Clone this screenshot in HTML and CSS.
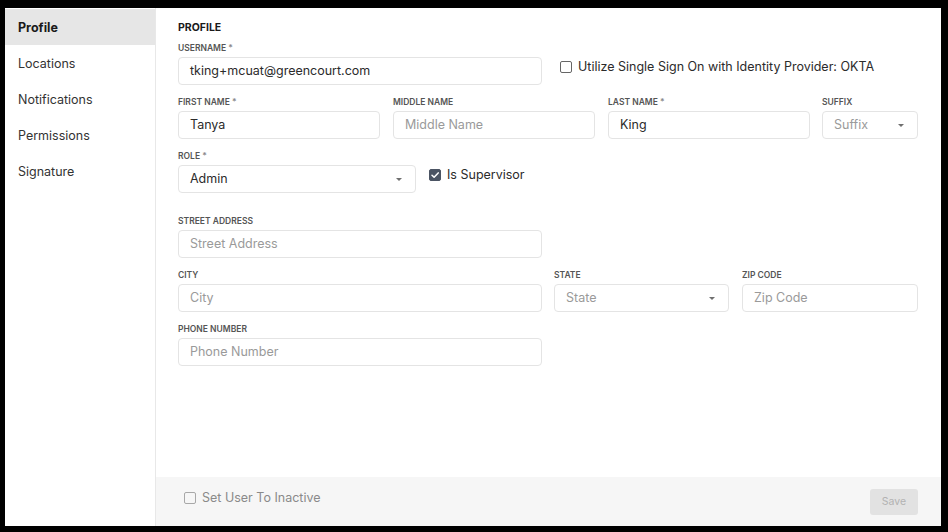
FILE: index.html
```html
<!DOCTYPE html>
<html>
<head>
<meta charset="utf-8">
<link rel="stylesheet" href="styles.css">
</head>
<body>
<div class="app">
  <nav class="sidebar">
    <div class="nav-item active">Profile</div>
    <div class="nav-item">Locations</div>
    <div class="nav-item">Notifications</div>
    <div class="nav-item">Permissions</div>
    <div class="nav-item">Signature</div>
  </nav>
  <main class="main">
    <div class="content">
      <h1 class="heading">PROFILE</h1>

      <div class="row">
        <div class="field w-wide">
          <label class="label">USERNAME <span class="req">*</span></label>
          <div class="input">tking+mcuat@greencourt.com</div>
        </div>
        <div class="check-group sso">
          <span class="checkbox"></span>
          <span class="check-label">Utilize Single Sign On with Identity Provider: OKTA</span>
        </div>
      </div>

      <div class="row">
        <div class="field w-name">
          <label class="label">FIRST NAME <span class="req">*</span></label>
          <div class="input">Tanya</div>
        </div>
        <div class="field w-name">
          <label class="label">MIDDLE NAME</label>
          <div class="input placeholder">Middle Name</div>
        </div>
        <div class="field w-name">
          <label class="label">LAST NAME <span class="req">*</span></label>
          <div class="input">King</div>
        </div>
        <div class="field w-suffix">
          <label class="label">SUFFIX</label>
          <div class="input select placeholder">Suffix<span class="caret"></span></div>
        </div>
      </div>

      <div class="row">
        <div class="field w-role">
          <label class="label">ROLE <span class="req">*</span></label>
          <div class="input select">Admin<span class="caret"></span></div>
        </div>
        <div class="check-group">
          <span class="checkbox checked">
            <svg viewBox="0 0 12 12" width="12" height="12"><path d="M3 6.2 L5.1 8.3 L9.2 3.9" fill="none" stroke="#fff" stroke-width="1.5" stroke-linecap="round" stroke-linejoin="round"/></svg>
          </span>
          <span class="check-label">Is Supervisor</span>
        </div>
      </div>

      <div class="row section-gap">
        <div class="field w-wide">
          <label class="label">STREET ADDRESS</label>
          <div class="input placeholder">Street Address</div>
        </div>
      </div>

      <div class="row">
        <div class="field w-wide">
          <label class="label">CITY</label>
          <div class="input placeholder">City</div>
        </div>
        <div class="field w-state">
          <label class="label">STATE</label>
          <div class="input select placeholder">State<span class="caret"></span></div>
        </div>
        <div class="field w-zip">
          <label class="label">ZIP CODE</label>
          <div class="input placeholder">Zip Code</div>
        </div>
      </div>

      <div class="row">
        <div class="field w-wide">
          <label class="label">PHONE NUMBER</label>
          <div class="input placeholder">Phone Number</div>
        </div>
      </div>
    </div>

    <footer class="footer">
      <div class="check-group inactive">
        <span class="checkbox light"></span>
        <span class="check-label">Set User To Inactive</span>
      </div>
      <button class="save">Save</button>
    </footer>
  </main>
</div>
</body>
</html>
```
FILE: styles.css
```css
* { box-sizing: border-box; }

html, body {
  margin: 0;
  height: 532px;
}

body {
  background: #000;
  padding: 8px 7px 6px 5px;
  font-family: "Inter", "Open Sans", sans-serif;
  color: #2b2b2b;
}

.app {
  display: flex;
  height: 100%;
  background: #fff;
}

.sidebar {
  width: 151px;
  border-right: 1px solid #e8e8e8;
  padding-top: 1px;
  flex-shrink: 0;
}

.nav-item {
  height: 36px;
  line-height: 38px;
  padding-left: 13px;
  font-size: 12.5px;
  color: #333;
}

.nav-item.active {
  background: #e6e6e6;
  font-weight: 700;
  color: #1a1a1a;
}

.main {
  flex: 1;
  display: flex;
  flex-direction: column;
}

.content {
  flex: 1;
  padding: 13px 23px 0 22px;
}

.heading {
  margin: 0 0 7px;
  font-size: 10.5px;
  line-height: 14px;
  font-weight: 700;
  color: #1a1a1a;
}

.row {
  display: flex;
  align-items: flex-start;
  column-gap: 13px;
  margin-bottom: 11px;
}

.row.section-gap {
  margin-top: 22px;
}

.field {
  display: flex;
  flex-direction: column;
  flex-shrink: 0;
}

.w-wide { width: 364px; }
.w-name { width: 202px; }
.w-suffix { width: 96px; margin-left: -1px; }
.w-role { width: 238px; }
.w-state { width: 175px; margin-left: -1px; }
.w-zip { width: 176px; }

.label {
  font-size: 8.5px;
  line-height: 12px;
  font-weight: 600;
  color: #555;
  margin-bottom: 3px;
}

.req { color: #888; }

.input {
  height: 28px;
  border: 1px solid #e4e4e4;
  border-radius: 4px;
  padding: 0 11px;
  font-size: 12.5px;
  line-height: 25px;
  color: #2b2b2b;
  position: relative;
}

.input.placeholder { color: #9a9a9a; }

.caret {
  position: absolute;
  right: 13px;
  top: 12px;
  width: 0;
  height: 0;
  border-left: 3.5px solid transparent;
  border-right: 3.5px solid transparent;
  border-top: 3.5px solid #6f6f6f;
}

.check-group {
  display: flex;
  align-items: center;
  gap: 6px;
  margin-top: 19px;
  font-size: 12.5px;
  color: #2b2b2b;
  line-height: 12px;
}

.check-group.sso { margin-left: 5px; }

.checkbox {
  width: 12px;
  height: 12px;
  border: 1.5px solid #666;
  border-radius: 2px;
  display: inline-flex;
  align-items: center;
  justify-content: center;
  flex-shrink: 0;
}

.checkbox.checked {
  background: #4b5463;
  border-color: #4b5463;
}

.checkbox.checked svg { display: block; flex-shrink: 0; }

.checkbox.light { border-color: #a8a8a8; }

.footer {
  height: 49px;
  background: #f6f6f6;
  display: flex;
  align-items: center;
  justify-content: space-between;
  padding: 0 23px 0 28px;
}

.inactive {
  margin-top: -8px;
  color: #8a8a8a;
}

.save {
  width: 48px;
  height: 26px;
  border: none;
  border-radius: 3px;
  background: #e2e2e2;
  color: #b2b2b2;
  font-family: inherit;
  font-size: 10.5px;
  padding: 0;
}
```
